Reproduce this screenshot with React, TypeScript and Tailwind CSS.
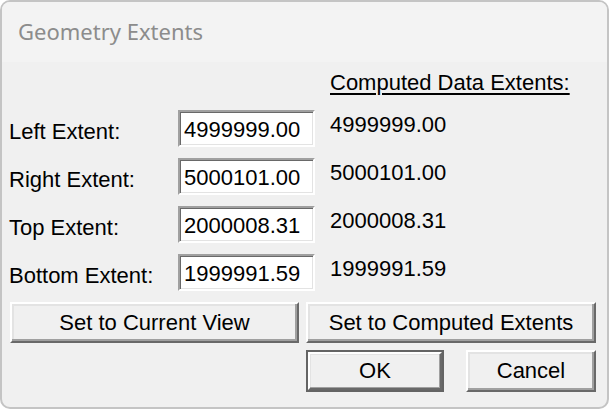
import React from "react";

const font = { fontFamily: '"Liberation Sans", Arial, sans-serif' };

function Field({ value }: { value: string }) {
  return (
    <div className="w-[137px] h-[37px] bg-white border-2 border-t-[#a0a0a0] border-l-[#a0a0a0] border-b-white border-r-white shadow-[inset_1px_1px_0_#696969,inset_-1px_-1px_0_#e3e3e3]">
      <div className="pl-[4px] pt-[5px] leading-[26px] text-[22px] text-black">{value}</div>
    </div>
  );
}

function Btn({ label, w, h, def }: { label: string; w: string; h: string; def?: boolean }) {
  if (def) {
    return (
      <div className={`${w} ${h} border-2 border-[#646464] bg-[#f0f0f0]`}>
        <div className="w-full h-full flex items-center justify-center border-2 border-t-white border-l-white border-b-[#696969] border-r-[#696969] shadow-[inset_-1px_-1px_0_#a0a0a0,inset_1px_1px_0_#e3e3e3] text-[22px] leading-[26px] text-black">
          {label}
        </div>
      </div>
    );
  }
  return (
    <div
      className={`${w} ${h} flex items-center justify-center bg-[#f0f0f0] border-2 border-t-white border-l-white border-b-[#696969] border-r-[#696969] shadow-[inset_-2px_-2px_0_#a0a0a0,inset_2px_2px_0_#e3e3e3] text-[22px] leading-[26px] text-black`}
    >
      {label}
    </div>
  );
}

export default function App() {
  const rows = [
    ["Left Extent:", "4999999.00", "4999999.00"],
    ["Right Extent:", "5000101.00", "5000101.00"],
    ["Top Extent:", "2000008.31", "2000008.31"],
    ["Bottom Extent:", "1999991.59", "1999991.59"],
  ];
  return (
    <div className="w-[610px] h-[410px] bg-white">
      <div
        className="w-[609px] h-[409px] rounded-[10px] border-2 border-[#c4c4c4] bg-[#f0f0f0] overflow-hidden flex flex-col"
        style={font}
      >
        <div
          className="h-[60px] shrink-0 bg-[#f3f3f3] pl-[16px] pt-[15px] text-[22px] leading-[28px] text-[#8c8c8c]"
          style={{ fontFamily: '"Noto Sans", "Open Sans", sans-serif' }}
        >
          Geometry Extents
        </div>
        <div className="flex flex-col pl-[7px]">
          <div className="ml-[321px] mt-[8px] h-[26px] leading-[26px] text-[22px] text-black underline decoration-2 underline-offset-[3px]">
            Computed Data Extents:
          </div>
          <div className="mt-[14px] flex flex-col gap-[11px]">
            {rows.map(([l, v, c]) => (
              <div key={l} className="flex h-[37px]">
                <div className="w-[169px] pt-[9px] leading-[26px] text-[22px] text-black">{l}</div>
                <Field value={v} />
                <div className="ml-[15px] pt-[2px] leading-[26px] text-[22px] text-black">{c}</div>
              </div>
            ))}
          </div>
          <div className="mt-[11px] ml-[1px] flex gap-[7px]">
            <Btn label="Set to Current View" w="w-[289px]" h="h-[41px]" />
            <Btn label="Set to Computed Extents" w="w-[290px]" h="h-[41px]" />
          </div>
          <div className="mt-[7px] ml-[297px] flex gap-[22px]">
            <Btn label="OK" w="w-[138px]" h="h-[42px]" def />
            <Btn label="Cancel" w="w-[130px]" h="h-[42px]" />
          </div>
        </div>
      </div>
    </div>
  );
}
